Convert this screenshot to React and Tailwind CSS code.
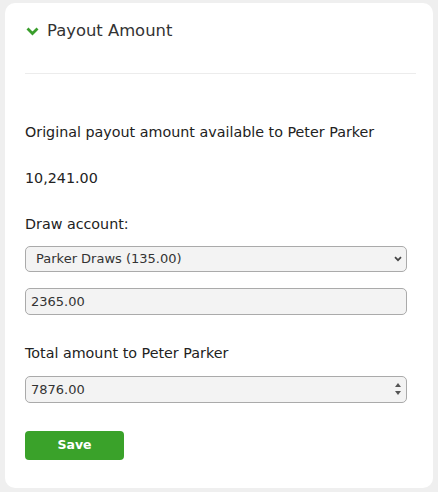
export default function App() {
  return (
    <div className="min-h-[492px] bg-[#efefef] px-[5px] pt-[3px] pb-[5px] font-['DejaVu_Sans',sans-serif] text-[#222]">
      <div className="bg-white rounded-[10px] pl-[20px] pr-[26px] pt-[16px] pb-[28px]">
        <div className="flex items-center gap-[8px] h-[24px] pl-[1px]">
          <svg width="13" height="10" viewBox="0 0 13 10">
            <path d="M1.5 2.5 L6.5 7.5 L11.5 2.5" fill="none" stroke="#3a9e2c" strokeWidth="2.8" />
          </svg>
          <span className="text-[16.4px] leading-[24px] text-[#333]">Payout Amount</span>
        </div>
        <div className="mt-[30px] h-px bg-[#ececec] mr-[-9px]" />
        <p className="mt-[48px] text-[14.3px] leading-[21px]">Original payout amount available to Peter Parker</p>
        <p className="mt-[25px] text-[14.3px] leading-[21px]">10,241.00</p>
        <p className="mt-[25px] text-[14.3px] leading-[21px]">Draw account:</p>
        <div className="mt-[11px] relative">
          <select className="w-full h-[26px] appearance-none rounded-[5px] border border-[#aaa] bg-[#f3f3f3] pl-[10px] text-[13px] text-[#333] outline-none">
            <option>Parker Draws (135.00)</option>
          </select>
          <svg width="8" height="6" viewBox="0 0 8 6" className="absolute right-[5px] top-[10px] pointer-events-none">
            <path d="M1 1.2 L4 4.2 L7 1.2" fill="none" stroke="#444" strokeWidth="1.7" />
          </svg>
        </div>
        <input
          defaultValue="2365.00"
          className="mt-[16px] block w-full h-[27px] rounded-[5px] border border-[#aaa] bg-[#f3f3f3] pl-[5px] text-[13px] text-[#333] outline-none"
        />
        <p className="mt-[28px] text-[14.3px] leading-[21px]">Total amount to Peter Parker</p>
        <div className="mt-[12px] relative">
          <input
            defaultValue="7876.00"
            className="block w-full h-[27px] rounded-[5px] border border-[#aaa] bg-[#f3f3f3] pl-[5px] text-[13px] text-[#333] outline-none"
          />
          <div className="absolute right-[6px] top-[7px] flex flex-col gap-[4px] pointer-events-none">
            <svg width="6" height="4" viewBox="0 0 6 4"><path d="M3 0 L6 4 L0 4 Z" fill="#555" /></svg>
            <svg width="6" height="4" viewBox="0 0 6 4"><path d="M0 0 L6 0 L3 4 Z" fill="#555" /></svg>
          </div>
        </div>
        <button className="mt-[28px] w-[99px] h-[29px] rounded-[4px] bg-[#3aa22a] text-white text-[12.5px] font-bold">
          Save
        </button>
      </div>
    </div>
  );
}
